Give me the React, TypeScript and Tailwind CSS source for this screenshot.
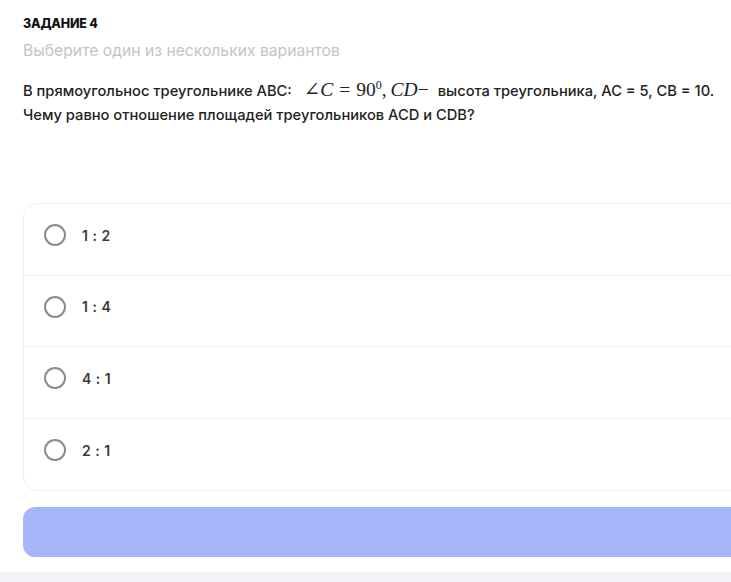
import React, { useState } from "react";

interface IOption {
  id: number;
  label: string;
}

const options: IOption[] = [
  { id: 1, label: "1 : 2" },
  { id: 2, label: "1 : 4" },
  { id: 3, label: "4 : 1" },
  { id: 4, label: "2 : 1" },
];

// inline formula: ∠C = 90⁰, CD−
const Formula = () => {
  return (
    <span
      className="ml-[12px] mr-[9px] text-[19.5px] leading-[20px] text-[#222]"
      style={{ fontFamily: '"Liberation Serif", "DejaVu Serif", serif' }}
    >
      <span>∠</span>
      <span className="italic">C</span>
      <span className="mx-[6px]">=</span>
      <span>90</span>
      <sup className="text-[12px] -top-[0.55em]">0</sup>
      <span>,</span>
      <span className="ml-[4px] italic">CD</span>
      <span>−</span>
    </span>
  );
};

export default function App() {
  const [selected, setSelected] = useState<number | null>(null);

  return (
    <div
      className="w-full overflow-hidden bg-white"
      style={{ fontFamily: 'Inter, "Noto Sans", "Liberation Sans", sans-serif' }}
    >
      <div className="w-[800px] px-[23px] pt-[16px] pb-[15px]">
        <h3 className="text-[12.5px] leading-[16px] font-extrabold tracking-[-0.2px] text-[#111]">
          ЗАДАНИЕ 4
        </h3>
        <p className="mt-[7px] text-[15.7px] leading-[24px] text-[#c4c4c6]">
          Выберите один из нескольких вариантов
        </p>
        <p className="mt-[16px] text-[14.7px] leading-[24px] font-medium text-[#222]">
          В прямоугольнос треугольнике ABC:
          <Formula />
          высота треугольника, AC = 5, CB = 10.
          <br />
          Чему равно отношение площадей треугольников ACD и CDB?
        </p>

        <div className="mt-[76px] rounded-[14px] border border-[#efefef] divide-y divide-[#efefef]">
          {options.map((option) => (
            <label
              key={option.id}
              className="flex h-[71.5px] cursor-pointer items-center gap-[16px] pb-[8px] pl-[20px]"
              onClick={() => setSelected(option.id)}
            >
              <span className="flex h-[22px] w-[22px] items-center justify-center rounded-full border-2 border-[#8c8c90]">
                {selected === option.id && (
                  <span className="h-[10px] w-[10px] rounded-full bg-[#5b6ef5]" />
                )}
              </span>
              <span className="text-[14px] font-semibold tracking-[0.5px] text-[#3a3a3c]">
                {option.label}
              </span>
            </label>
          ))}
        </div>

        <button className="mt-[16px] block h-[50px] w-full rounded-[12px] bg-[#a7b6f9]" />
      </div>
      <div className="h-[10px] bg-[#f3f3f7]" />
    </div>
  );
}
